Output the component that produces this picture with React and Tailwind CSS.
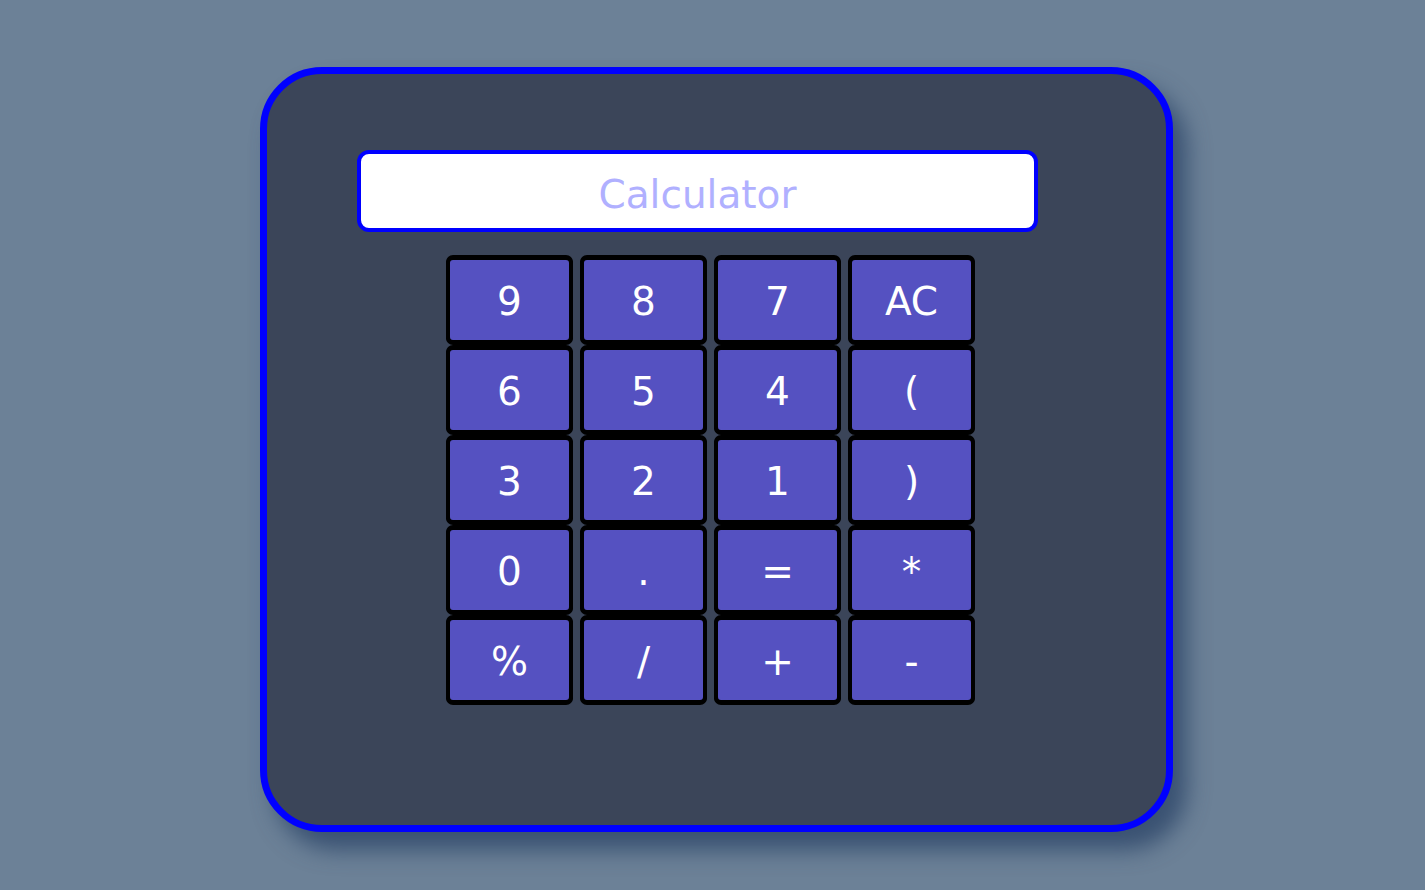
const keys = ["9", "8", "7", "AC", "6", "5", "4", "(", "3", "2", "1", ")", "0", ".", "=", "*", "%", "/", "+", "-"];

export default function App() {
  return (
    <div
      className="min-h-screen bg-[#6c8197] pt-[67px] pl-[260px]"
      style={{ fontFamily: '"DejaVu Sans", "Liberation Sans", sans-serif' }}
    >
      {/* Card */}
      <div className="w-[913px] h-[765px] bg-[#3b4559] border-[7px] border-[#0000ff] rounded-[62px] shadow-[14px_18px_22px_rgba(45,70,105,0.8)] pt-[76px] pl-[90px]">
        {/* Display */}
        <input
          type="text"
          placeholder="Calculator"
          className="w-[681px] h-[82px] pt-[6px] bg-white border-[4px] border-[#0000ff] rounded-[12px] text-center text-[39px] text-[#b0b0ff] placeholder:text-[#b0b0ff] outline-none"
        />

        {/* Keys */}
        <div className="grid grid-cols-[repeat(4,127px)] gap-x-[7px] gap-y-[2px] mt-[24px] ml-[89px]">
          {keys.map((k) => (
            <button
              key={k}
              className="h-[88px] pt-[5px] bg-[#5551c1] border-[4px] border-black rounded-[7px] shadow-[0_1px_0_black,0_-1px_0_black] text-white text-[39px] flex items-center justify-center"
            >
              {k}
            </button>
          ))}
        </div>
      </div>
    </div>
  );
}
